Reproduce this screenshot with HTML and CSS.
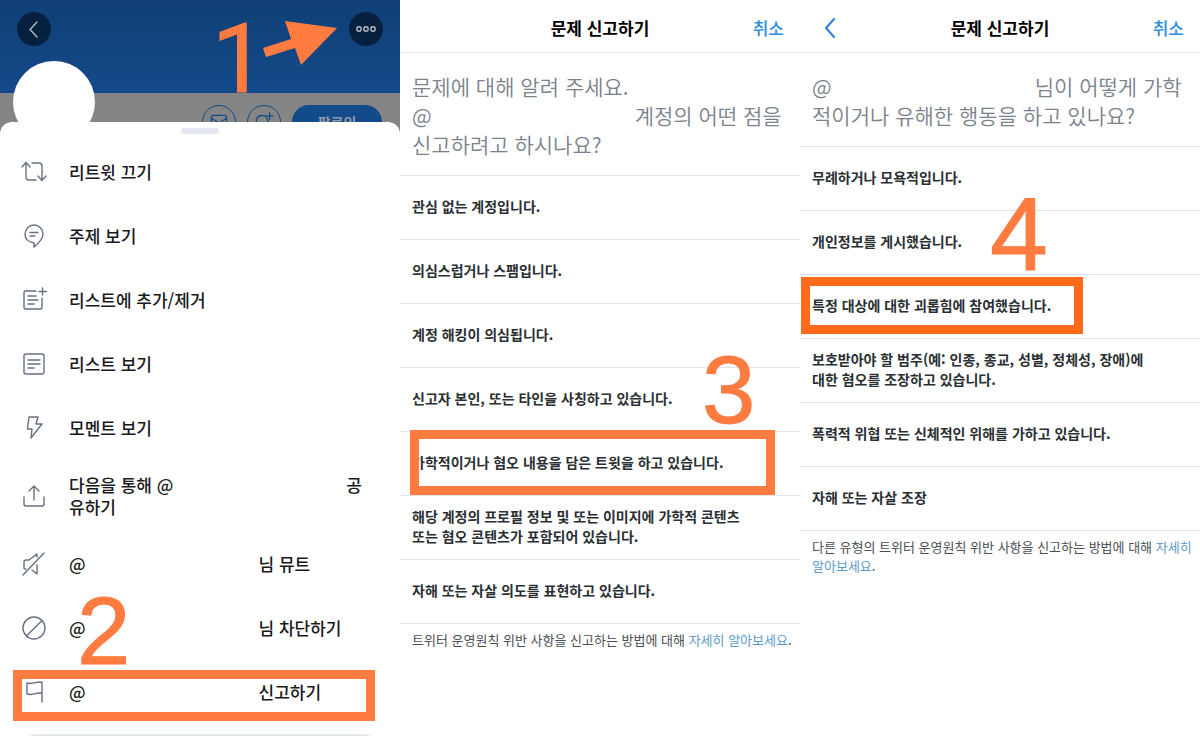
FILE: index.html
```html
<!DOCTYPE html>
<html lang="ko">
<head>
<meta charset="utf-8">
<meta name="viewport" content="width=device-width, initial-scale=1">
<title>문제 신고하기</title>
<link rel="stylesheet" href="styles.css">
</head>
<body>
<main class="steps">
  <section class="panel account">
    <div class="profile">
      <div class="banner">
        <button class="round-button" aria-label="뒤로"><svg viewBox="0 0 34 34"><path d="M20 10l-7 7.500 7 7.500"/></svg></button>
        <button class="round-button" aria-label="더 보기"><svg viewBox="0 0 34 34"><circle cx="10" cy="17" r="2.200"/><circle cx="17" cy="17" r="2.200"/><circle cx="24" cy="17" r="2.200"/></svg></button>
      </div>
      <div class="profile-actions">
        <button class="outline-button" aria-label="쪽지"><svg viewBox="0 0 34 34"><rect x="9" y="10" width="16" height="13" rx="2"/><path d="M9 13l8 5 8-5"/></svg></button>
        <button class="outline-button" aria-label="알림"><svg viewBox="0 0 34 34"><path d="M10 20c-3-5 0-10 5-10 4 0 7 3 6 8M23 7v7M19.500 10.500h7"/></svg></button>
        <button class="follow">팔로잉</button>
      </div>
      <div class="avatar"></div>
    </div>
    <svg class="arrow" viewBox="0 0 76 46" aria-hidden="true"><path d="M23 0L75 7 39 44 33 27 4 36 1 27 29 18z"/></svg>
    <span class="step-number one">1</span>
    <div class="sheet">
      <div class="handle"></div>
      <ul class="menu">
        <li><button class="menu-item"><svg viewBox="0 0 26 26"><path d="M1 8l4-4.500L9 8M5 4v14q0 3 3 3h7M11 4h7q3 0 3 3v14M17 17l4 4.500 4-4.500"/></svg><span>리트윗 끄기</span></button></li>
        <li><button class="menu-item"><svg viewBox="0 0 26 26"><path d="M13 20C7 19 4 15.500 4 11a9 9 0 0 1 18 0c0 5-4 9-9 13zM9 9.500h8M9 13h5"/></svg><span>주제 보기</span></button></li>
        <li><button class="menu-item"><svg viewBox="0 0 26 26"><path d="M15 4H4.500Q3 4 3 5.500v15Q3 22 4.500 22h15q1.500 0 1.500-1.500V11M7 9h8M7 13h10M7 17h6M21.500 1v7M18 4.500h7.500"/></svg><span>리스트에 추가/제거</span></button></li>
        <li><button class="menu-item"><svg viewBox="0 0 26 26"><rect x="3" y="3" width="20" height="20" rx="2"/><path d="M7 9h12M7 13h12M7 17h6"/></svg><span>리스트 보기</span></button></li>
        <li><button class="menu-item"><svg viewBox="0 0 26 26"><path d="M8 2h9l-2 7h6L10 23l1-9H6.500z"/></svg><span>모멘트 보기</span></button></li>
        <li><button class="menu-item"><svg viewBox="0 0 26 26"><path d="M3 14v7q0 2 2 2h16q2 0 2-2v-7M13 17V3M8 8l5-5 5 5"/></svg><span>다음을 통해 @<i class="name"></i>공<br>유하기</span></button></li>
        <li><button class="menu-item"><svg viewBox="0 0 26 26"><path d="M2 24L23 2M5 18H4q-1 0-1-1v-6q0-2 2-2h3l8-6v3M16 14v9l-5-4"/></svg><span>@<i class="name"></i>님 뮤트</span></button></li>
        <li><button class="menu-item"><svg viewBox="0 0 26 26"><circle cx="13" cy="13" r="11"/><path d="M5.500 21L21 5.500"/></svg><span>@<i class="name"></i>님 차단하기</span></button><span class="step-number two">2</span></li>
        <li><button class="menu-item"><svg viewBox="0 0 26 26"><path d="M21 23V3M21 3.500c-5-2-8 2.500-15 .5v11c7 2 10-2.500 15-.5"/></svg><span>@<i class="name"></i>신고하기</span></button><span class="frame frame-report"></span></li>
      </ul>
      <div class="sheet-end"></div>
    </div>
  </section>

  <section class="panel">
    <header class="bar"><h1>문제 신고하기</h1><button class="cancel">취소</button></header>
    <p class="question">문제에 대해 알려 주세요.<br>@<i class="long-name"></i>계정의 어떤 점을<br>신고하려고 하시나요?</p>
    <ul class="options">
      <li><button class="option">관심 없는 계정입니다.</button></li>
      <li><button class="option">의심스럽거나 스팸입니다.</button></li>
      <li><button class="option">계정 해킹이 의심됩니다.</button></li>
      <li><button class="option">신고자 본인, 또는 타인을 사칭하고 있습니다.</button><span class="step-number three">3</span></li>
      <li><button class="option">가학적이거나 혐오 내용을 담은 트윗을 하고 있습니다.</button><span class="frame frame-abuse"></span></li>
      <li><button class="option">해당 계정의 프로필 정보 및 또는 이미지에 가학적 콘텐츠<br>또는 혐오 콘텐츠가 포함되어 있습니다.</button></li>
      <li><button class="option">자해 또는 자살 의도를 표현하고 있습니다.</button></li>
    </ul>
    <p class="note">트위터 운영원칙 위반 사항을 신고하는 방법에 대해 <a href="#">자세히 알아보세요</a>.</p>
  </section>

  <section class="panel">
    <header class="bar"><button class="back" aria-label="뒤로"><svg viewBox="0 0 12 20"><path d="M10 1L2 10l8 9"/></svg></button><h1>문제 신고하기</h1><button class="cancel">취소</button></header>
    <p class="question">@<i class="long-name"></i>님이 어떻게 가학<br>적이거나 유해한 행동을 하고 있나요?</p>
    <ul class="options">
      <li><button class="option">무례하거나 모욕적입니다.</button></li>
      <li><button class="option">개인정보를 게시했습니다.</button><span class="step-number four">4</span></li>
      <li><button class="option">특정 대상에 대한 괴롭힘에 참여했습니다.</button><span class="frame frame-target"></span></li>
      <li><button class="option">보호받아야 할 범주(예: 인종, 종교, 성별, 정체성, 장애)에<br>대한 혐오를 조장하고 있습니다.</button></li>
      <li><button class="option">폭력적 위협 또는 신체적인 위해를 가하고 있습니다.</button></li>
      <li><button class="option">자해 또는 자살 조장</button></li>
    </ul>
    <p class="note">다른 유형의 트위터 운영원칙 위반 사항을 신고하는 방법에 대해 <a href="#">자세히<br>알아보세요</a>.</p>
  </section>
</main>
</body>
</html>
```
FILE: styles.css
```css
* { box-sizing: border-box; }
body {
  margin: 0;
  background: #fff;
  color: #17191c;
  font-family: "Noto Sans CJK KR", sans-serif;
  word-break: keep-all;
}
button {
  border: 0;
  padding: 0;
  background: none;
  color: inherit;
  font: inherit;
  text-align: left;
}
ul { list-style: none; margin: 0; padding: 0; }
li { position: relative; }
svg { display: block; fill: none; stroke: currentColor; stroke-linecap: round; stroke-linejoin: round; }

.steps {
  display: grid;
  grid-template-columns: repeat(3, minmax(0, 1fr));
  height: 100vh;
  overflow: hidden;
}
.panel { position: relative; }

/* Profile behind the action sheet */
.account { background: #858585; padding-top: 122px; }
.profile { position: absolute; inset: 0; }
.banner {
  display: flex;
  justify-content: space-between;
  height: 93px;
  padding: 12px 17px;
  background: linear-gradient(#0f3f75, #134a8a);
}
.round-button {
  width: 34px;
  height: 34px;
  border-radius: 50%;
  background: #06203f;
  color: #b4bac2;
}
.round-button svg { stroke-width: 1.4; }
.profile-actions {
  display: flex;
  justify-content: flex-end;
  gap: 11px;
  padding: 12px 18px;
  color: #134a8a;
}
.outline-button {
  width: 34px;
  height: 34px;
  border: 1px solid #134a8a;
  border-radius: 50%;
}
.outline-button svg { stroke-width: 1.4; }
.follow {
  width: 90px;
  height: 34px;
  border-radius: 17px;
  background: #134a8a;
  color: #8c9aac;
  font-size: 14px;
  font-weight: 700;
  text-align: center;
}
.avatar {
  position: absolute;
  top: 61px;
  left: 13px;
  width: 82px;
  height: 82px;
  border-radius: 50%;
  background: #fff;
}

/* Action sheet */
.sheet {
  position: relative;
  min-height: 100%;
  padding-top: 6px;
  border-radius: 12px 12px 0 0;
  background: #fff;
}
.handle {
  width: 38px;
  height: 6px;
  margin: 0 auto 6px;
  border-radius: 3px;
  background: #e4e6f0;
}
.menu-item {
  display: flex;
  align-items: center;
  gap: 22px;
  width: 100%;
  min-height: 64px;
  padding: 14px 21px;
  font-size: 17px;
  font-weight: 500;
  line-height: 22px;
}
.menu-item svg { flex: none; width: 26px; height: 26px; color: #667180; stroke-width: 1.4; }
.name { display: inline-block; width: 173px; }
.sheet-end {
  height: 20px;
  margin: 10px 25px 0;
  border-radius: 10px;
  background: #e3e8eb;
}

/* Report screens */
.bar {
  display: grid;
  grid-template-columns: 1fr auto 1fr;
  align-items: center;
  height: 53px;
  padding: 4px 16px 0;
  border-bottom: 1px solid #e1e4e8;
  font-size: 17px;
  line-height: 24px;
}
.bar h1 { grid-column: 2; margin: 0; font-size: 17px; font-weight: 700; color: #000; }
.cancel { grid-column: 3; justify-self: end; color: #2b8be0; font-weight: 500; }
.back { grid-column: 1; grid-row: 1; justify-self: start; padding-left: 8px; color: #2b7fd0; }
.back svg { width: 12px; height: 20px; stroke-width: 2; }
.question {
  margin: 0;
  padding: 19px 12px 16px;
  border-bottom: 1px solid #e1e4e8;
  color: #7b828c;
  font-size: 21px;
  font-weight: 350;
  line-height: 29px;
  white-space: nowrap;
}
.long-name { display: inline-block; width: 203px; }
.option {
  display: block;
  width: 100%;
  min-height: 64px;
  padding: 0 12px 3px;
  border-bottom: 1px solid #e1e4e8;
  color: #292f33;
  font-size: 14px;
  font-weight: 700;
  line-height: 20px;
}
.note {
  margin: 0;
  padding: 6px 0 0 12px;
  color: #4a4f54;
  font-size: 13px;
  line-height: 19px;
}
.note a { color: #5b9bcb; text-decoration: none; }

/* Walkthrough marks drawn over the screens */
.step-number {
  position: absolute;
  color: #ff7b40;
  font-family: "Liberation Sans", sans-serif;
  font-size: 96px;
  line-height: 1;
  pointer-events: none;
  -webkit-text-stroke: 1px #ff7b40;
}
.one { top: 11px; left: 212px; font-family: Roboto, sans-serif; }
.two { top: -13px; left: 77px; }
.three { top: -26px; left: 302px; z-index: 1; }
.four { top: -29px; left: 190px; z-index: 1; font-size: 104px; }
.arrow { position: absolute; top: 21px; left: 262px; width: 76px; height: 46px; fill: #ff7b40; stroke: none; }
.frame { position: absolute; border: 9px solid #ff7b40; pointer-events: none; }
.frame-report { top: 10px; left: 13px; right: 25px; height: 51px; }
.frame-abuse { top: -2px; left: 10px; right: 25px; height: 65px; }
.frame-target { top: 2px; left: 1px; width: 282px; height: 57px; border-color: #ff6b1a; }
```
